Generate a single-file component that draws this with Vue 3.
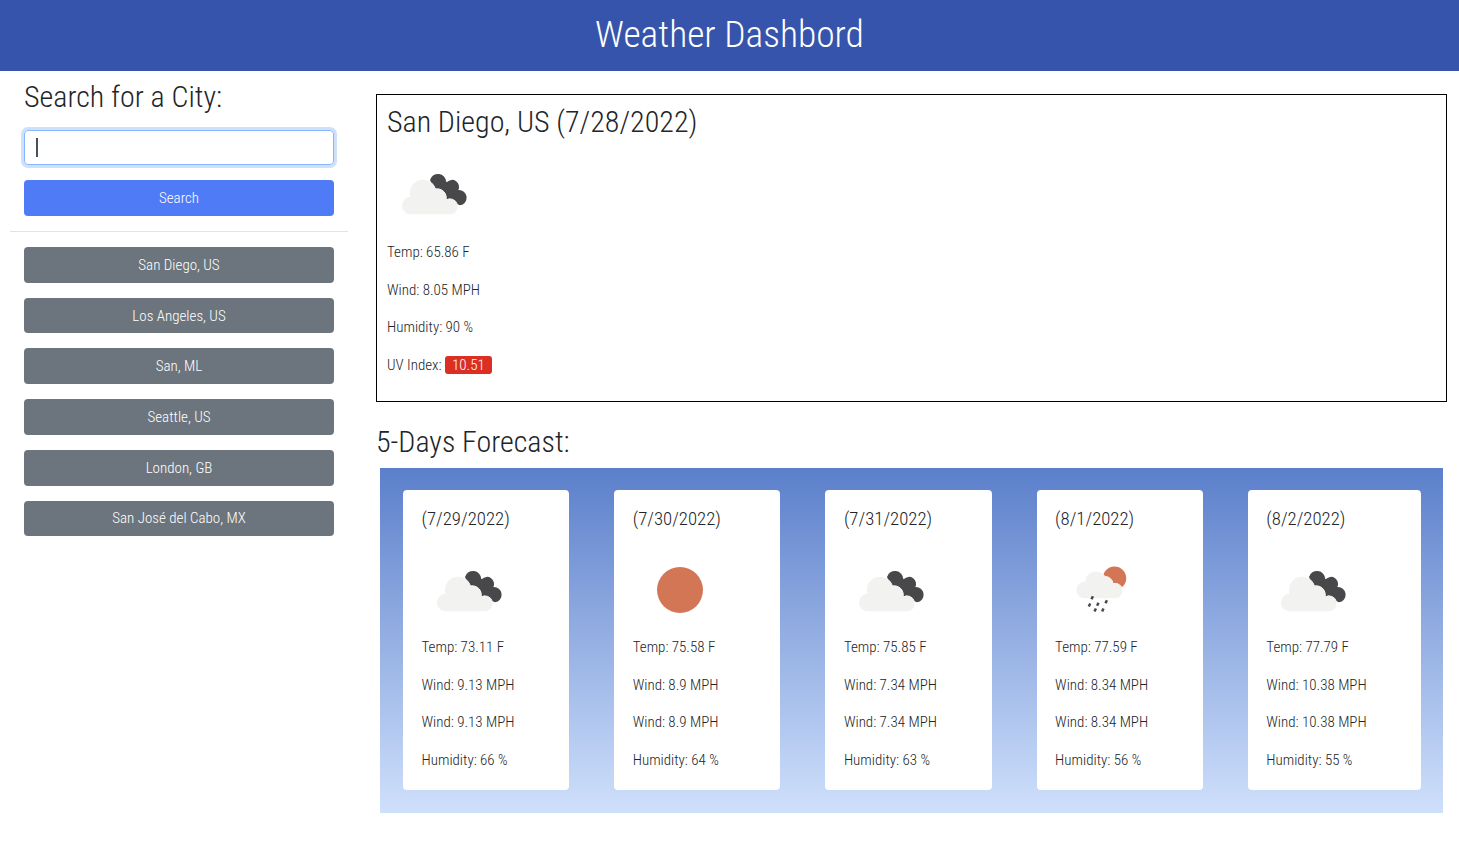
<template>
  <div class="page">
    <header class="top">Weather Dashbord</header>

    <main class="layout">
      <aside class="side">
        <h2 class="side-title">Search for a City:</h2>
        <div class="search">
          <div class="field"><span class="caret"></span></div>
          <button class="btn btn-search">Search</button>
        </div>
        <hr class="rule" />
        <div class="history">
          <button v-for="city in cities" :key="city" class="btn btn-city">{{ city }}</button>
        </div>
      </aside>

      <section class="content">
        <div class="today">
          <h2 class="today-title">San Diego, US (7/28/2022)</h2>
          <svg class="icon" viewBox="0 0 94 94">
            <use href="#clouds" />
          </svg>
          <p class="line">Temp: 65.86 F</p>
          <p class="line">Wind: 8.05 MPH</p>
          <p class="line">Humidity: 90 %</p>
          <p class="line">UV Index: <span class="uv">10.51</span></p>
        </div>

        <h2 class="forecast-title">5-Days Forecast:</h2>
        <div class="forecast">
          <div v-for="day in days" :key="day.date" class="day">
            <h5 class="day-date">({{ day.date }})</h5>
            <svg class="icon" viewBox="0 0 94 94">
              <use :href="'#' + day.icon" />
            </svg>
            <p class="line">Temp: {{ day.temp }} F</p>
            <p class="line">Wind: {{ day.wind }} MPH</p>
            <p class="line">Wind: {{ day.wind }} MPH</p>
            <p class="line">Humidity: {{ day.humidity }} %</p>
          </div>
        </div>
      </section>
    </main>

    <svg class="defs" width="0" height="0">
      <defs>
        <g id="clouds">
          <path fill="#48484a" d="M43 34A8.300 8.300 0 0 1 59.300 36L60 36A7 7 0 0 1 71.300 44A7.700 7.700 0 0 1 73 59.300L50 50Z" />
          <path fill="#f2f2f0" stroke="#fff" stroke-width="1" paint-order="stroke" d="M24 68.300A8.800 8.800 0 1 1 23.500 50.700A13 13 0 0 1 48.500 43A9 9 0 0 1 59 54A7.700 7.700 0 1 1 63 68.300Z" />
        </g>
        <g id="sun">
          <circle cx="47" cy="47" r="23" fill="#d37656" />
        </g>
        <g id="rain">
          <circle cx="59.500" cy="35.300" r="11.700" fill="#d37656" />
          <path fill="#f2f2f0" stroke="#fff" stroke-width="1" paint-order="stroke" d="M29.500 55.300A8.300 8.300 0 1 1 30 38.700A11 11 0 0 1 50 33.500A8 8 0 0 1 58 40.600A7.500 7.500 0 1 1 59.500 55.300Z" />
          <g stroke="#48484a" stroke-width="2.500">
            <path d="M37.900 53.200L36.500 56.200" />
            <path d="M35.200 60.500L33.800 63.500" />
            <path d="M43.500 59.800L42.100 62.800" />
            <path d="M51.900 57.200L50.500 60.200" />
            <path d="M40.900 65.500L39.500 68.500" />
            <path d="M48.500 65.500L47.100 68.500" />
          </g>
        </g>
      </defs>
    </svg>
  </div>
</template>

<script setup>
const cities = [
  'San Diego, US',
  'Los Angeles, US',
  'San, ML',
  'Seattle, US',
  'London, GB',
  'San José del Cabo, MX'
]

const days = [
  { date: '7/29/2022', icon: 'clouds', temp: '73.11', wind: '9.13', humidity: 66 },
  { date: '7/30/2022', icon: 'sun', temp: '75.58', wind: '8.9', humidity: 64 },
  { date: '7/31/2022', icon: 'clouds', temp: '75.85', wind: '7.34', humidity: 63 },
  { date: '8/1/2022', icon: 'rain', temp: '77.59', wind: '8.34', humidity: 56 },
  { date: '8/2/2022', icon: 'clouds', temp: '77.79', wind: '10.38', humidity: 55 }
]
</script>

<style>
body {
  font-family: Roboto, "Liberation Sans", sans-serif;
  font-weight: 300;
  font-stretch: 75%;
  color: #212529;
  background: #fff;
}
</style>

<style scoped>
.page {
  width: 1459px;
  height: 867px;
  overflow: hidden;
}

.top {
  height: 71px;
  background: #3654ab;
  color: #fff;
  font-size: 37.500px;
  line-height: 68px;
  text-align: center;
}

.layout {
  display: flex;
}

.side {
  width: 338px;
  margin-left: 10px;
}

.side-title {
  margin: 8px 14px 15px;
  font-size: 30px;
  font-weight: 300;
  line-height: 36px;
}

.search {
  padding: 0 14px;
}

.field {
  height: 35.250px;
  box-sizing: border-box;
  border: 1px solid #86b7fe;
  border-radius: 4px;
  box-shadow: 0 0 0 3px #cfe0fd;
  padding: 7px 11px;
}

.caret {
  display: block;
  width: 1.500px;
  height: 19px;
  background: #495057;
}

.btn {
  display: block;
  width: 310px;
  height: 35.700px;
  border: 0;
  border-radius: 4px;
  color: #fff;
  font: inherit;
  font-size: 15px;
}

.btn-search {
  margin-top: 15px;
  background: #4f7bf6;
}

.rule {
  margin: 15px 0;
  border: 0;
  border-top: 1px solid #e2e3e4;
}

.history {
  display: flex;
  flex-direction: column;
  gap: 15.050px;
  padding: 0 14px;
}

.btn-city {
  background: #6c757d;
}

.content {
  margin-left: 28px;
  width: 1071px;
}

.today {
  margin-top: 23px;
  height: 308px;
  box-sizing: border-box;
  border: 1px solid #000;
  padding: 8px 10px;
}

.today-title {
  margin: 0 0 5px;
  font-size: 30px;
  font-weight: 300;
  line-height: 38px;
}

.icon {
  display: block;
  width: 94px;
  height: 94px;
  margin-bottom: 2px;
}

.day .icon {
  margin-bottom: 0;
}

.line {
  margin: 0 0 16px;
  font-size: 15px;
  line-height: 21.600px;
}

.uv {
  background: #dc2f24;
  color: #fff;
  border-radius: 3px;
  padding: 0 7px;
}

.forecast-title {
  margin: 21px 0 7px;
  font-size: 30px;
  font-weight: 300;
  line-height: 38px;
}

.forecast {
  margin-left: 4px;
  width: 1063px;
  height: 345px;
  box-sizing: border-box;
  padding: 22px 22px 23px 23px;
  background: linear-gradient(#5b7fcb, #cfe0fb);
  display: grid;
  grid-template-columns: 166.200fr 166.200fr 166.200fr 166.200fr 173.200fr;
  gap: 45px;
}

.day {
  height: 300px;
  box-sizing: border-box;
  background: #fff;
  border-radius: 4px;
  padding: 16px 18.500px 0;
}

.day-date {
  margin: 0 0 11px;
  font-size: 18.750px;
  font-weight: 300;
  line-height: 26px;
}

.defs {
  position: absolute;
}
</style>
